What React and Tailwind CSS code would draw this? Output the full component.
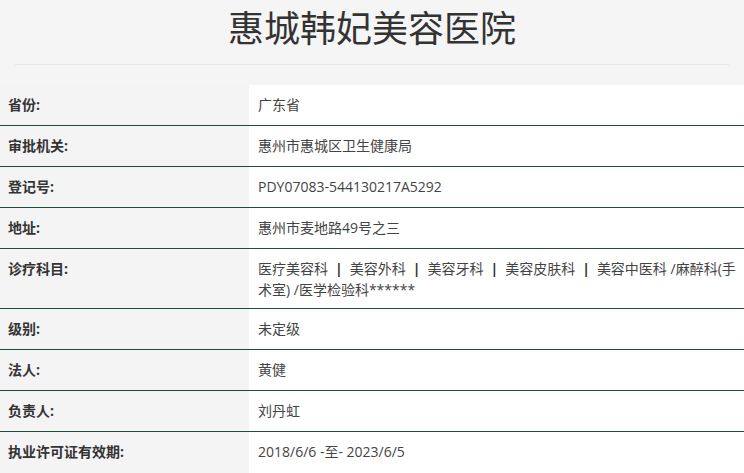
export default function App() {
  const P = () => <span className="inline-block mx-[7px] font-bold text-[#333]">|</span>;
  const rows = [
    ["省份:", "广东省"],
    ["审批机关:", "惠州市惠城区卫生健康局"],
    ["登记号:", "PDY07083-544130217A5292"],
    ["地址:", "惠州市麦地路49号之三"],
    [
      "诊疗科目:",
      <>
        <span>医疗美容科</span><P /><span>美容外科</span><P /><span>美容牙科</span><P /><span>美容皮肤科</span><P />
        <span>美容中医科 /麻醉科(手</span>
        <br />
        <span>术室) /医学检验科******</span>
      </>,
    ],
    ["级别:", "未定级"],
    ["法人:", "黄健"],
    ["负责人:", "刘丹虹"],
    ["执业许可证有效期:", "2018/6/6 -至- 2023/6/5"],
  ];
  return (
    <div
      className="w-[744px] h-[473px] overflow-hidden bg-[#f5f5f5]"
      style={{ fontFamily: '"Open Sans", "Noto Sans CJK SC", sans-serif' }}
    >
      <div className="h-[64px] flex items-center justify-center">
        <h1 className="text-[36px] leading-none text-[#333] font-normal -mt-[6px]">惠城韩妃美容医院</h1>
      </div>
      <div className="mx-[15px] border-t border-[#e6e6e6]" />
      <div className="mt-[20px]">
        {rows.map(([k, v], i) => (
          <div
            key={i}
            className={"flex min-h-[41px] " + (i < rows.length - 1 ? "border-b border-[#1f4d3a]" : "")}
          >
            <div className="w-[249px] shrink-0 bg-[#f4f4f4] pl-[8px] pt-[9px] pb-[8px] text-[14px] leading-[21px] font-bold text-[#333]">
              {k}
            </div>
            <div className="flex-1 whitespace-nowrap bg-white pl-[9px] pr-[2px] pt-[9px] pb-[8px] text-[14px] leading-[21px] text-[#444]">
              {v}
            </div>
          </div>
        ))}
      </div>
    </div>
  );
}
